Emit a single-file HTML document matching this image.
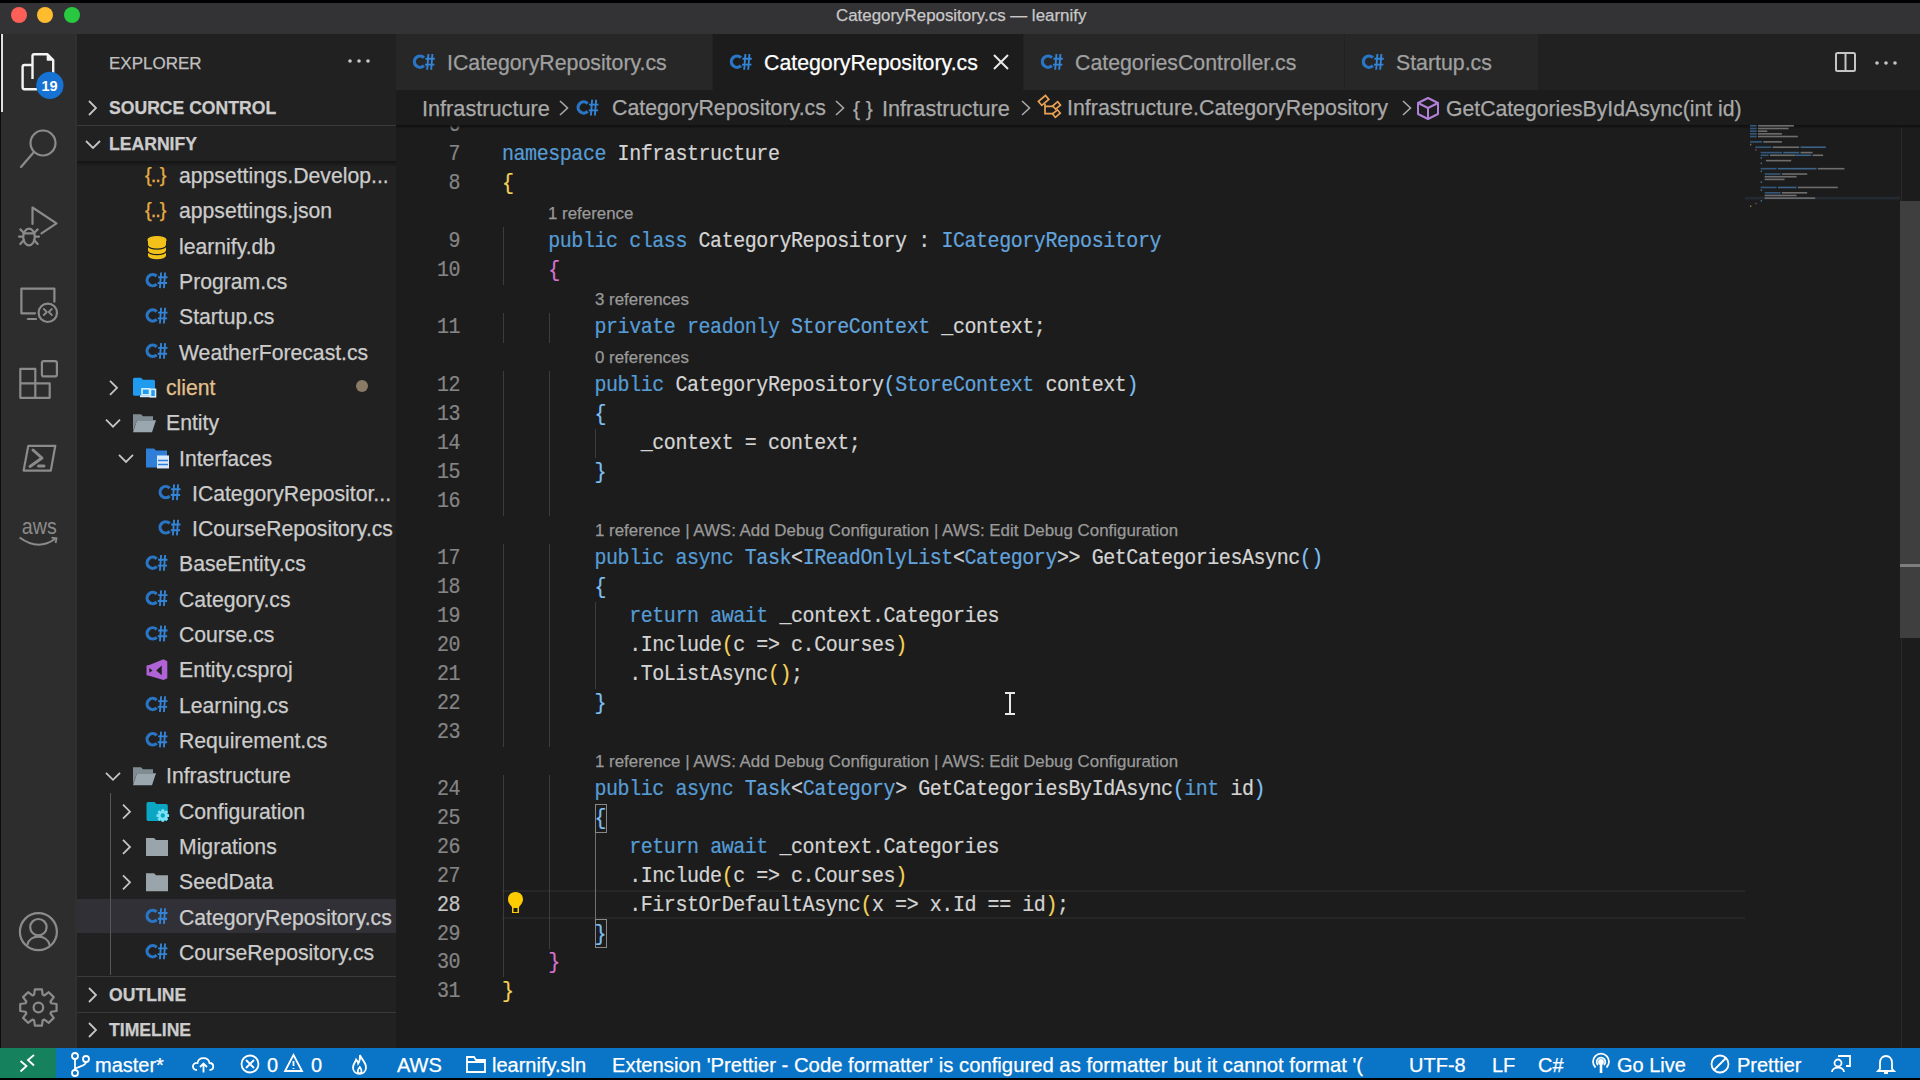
<!DOCTYPE html><html><head><meta charset='utf-8'><style>
*{margin:0;padding:0;box-sizing:border-box}
html,body{width:1920px;height:1080px;overflow:hidden;background:#000;font-family:"Liberation Sans", sans-serif}
.a{position:absolute}
.t{position:absolute;white-space:pre;line-height:1;font-family:"Liberation Sans", sans-serif}
.cs{position:absolute;font-family:"Liberation Sans", sans-serif;font-weight:700;color:#2f80d3;font-size:20px;letter-spacing:-2px;line-height:1}
.code{position:absolute;font-family:"Liberation Mono", monospace;white-space:pre;font-size:20px;letter-spacing:-0.44px;line-height:20px;height:20px;color:#d4d4d4;transform-origin:0 15.32px;transform:scaleY(1.147)}
.k{color:#569cd6}
.ty{color:#62a3dc}
.y{color:#f5d45a}
.p{color:#d873d2}
.bl{color:#7fc0f5}
.cl{position:absolute;font-family:"Liberation Sans", sans-serif;white-space:pre;font-size:16.9px;line-height:1;color:#999999}
.side{position:absolute;font-family:"Liberation Sans", sans-serif;white-space:pre;font-size:21.2px;line-height:1;color:#cccccc}
.hdr{position:absolute;font-family:"Liberation Sans", sans-serif;white-space:pre;font-size:17.6px;font-weight:700;line-height:1;color:#cccccc}
.sb{position:absolute;font-family:"Liberation Sans", sans-serif;white-space:pre;font-size:20px;line-height:1;color:#ffffff}
svg{position:absolute;overflow:visible}
.side,.t,.hdr,.sb,.cl{-webkit-text-stroke:0.25px currentColor}
.code{-webkit-text-stroke:0.2px currentColor}
</style></head><body>
<div class='a' style='left:0;top:3px;width:1920px;height:31px;background:#333235'></div>
<div class='a' style='left:11px;top:7px;width:16px;height:16px;border-radius:50%;background:#fe5f57'></div>
<div class='a' style='left:37px;top:7px;width:16px;height:16px;border-radius:50%;background:#febc2e'></div>
<div class='a' style='left:64px;top:7px;width:16px;height:16px;border-radius:50%;background:#28c840'></div>
<div class='t' style='left:836px;top:7.89px;font-size:16.9px;color:#c8c8c8'>CategoryRepository.cs — learnify</div>
<div class='a' style='left:0;top:34px;width:77px;height:1014px;background:#2d2d2d'></div>
<div class='a' style='left:0;top:34px;width:1px;height:1014px;background:#0c0c0c'></div>
<div class='a' style='left:75px;top:34px;width:2px;height:1014px;background:#303030'></div>
<div class='a' style='left:1px;top:34px;width:2px;height:78px;background:#e0e0e0'></div>
<svg style='left:0;top:0' width='80' height='1080'>
<g fill='none' stroke='#f4f4f4' stroke-width='2.4' stroke-linejoin='round'>
<path d='M32.5 79 V56 Q32.5 54.3 34.2 54.3 H47.5 L53.2 60 V75'/>
<path d='M47.5 55 V60 H52.5' fill='#f4f4f4' stroke-width='1.6'/>
<path d='M32 65 H24.5 Q22.6 65 22.6 66.9 V87.3 Q22.6 89.2 24.5 89.2 H37'/>
</g>
<circle cx='49.9' cy='85.4' r='13.6' fill='#1673d3'/>
<text x='49.6' y='90.6' font-family='Liberation Sans' font-weight='700' font-size='14.5' fill='#fff' text-anchor='middle'>19</text>
<g fill='none' stroke='#8b8b8b' stroke-width='2.2' stroke-linecap='round' stroke-linejoin='round'>
<circle cx='43' cy='143' r='12.5'/><path d='M34 152 L21 167'/>
<path d='M32.5 224 V207.5 L56.5 223.3 L41.5 233.3'/>
<ellipse cx='29' cy='237' rx='5.8' ry='8.3'/><path d='M23.3 233.3 H34.7 M20.3 229.4 L24 233 M19 236.6 H23 M20.3 244 L24 240 M37.7 229.4 L34 233 M39 236.6 H35 M37.7 244 L34 240'/>
<path d='M35 313.3 H21.4 V288.6 H54.4 V301.7'/><path d='M27.8 319 H36'/>
<circle cx='47.8' cy='312.8' r='9.2'/><path d='M43.8 309 L46.8 312 L43.8 315 M51.8 309 L48.8 312 L51.8 315' stroke-width='1.8'/>
<path d='M35.3 397.8 V368.9 H20.3 V397.8 H49.7 V383.3 H20.3' /><rect x='41.9' y='361.1' width='15' height='15.3' rx='2'/>
<path d='M28.3 445.8 H55.3 L50.8 470.6 H23.6 Z'/><path d='M33 450 L42 458 L30 466.4' stroke-width='3'/><path d='M38.5 466 H44' stroke-width='3'/>
<circle cx='38.4' cy='931.7' r='18.5'/><circle cx='38.4' cy='927.2' r='8.2'/><path d='M27.4 944.5 C30 934 46.8 934 49.4 944.5'/>
</g>
<text x='39.3' y='534' font-family='Liberation Sans' font-size='22' fill='#8b8b8b' text-anchor='middle' textLength='35' lengthAdjust='spacingAndGlyphs'>aws</text>
<path d='M19.6 537.5 Q38 551 55 539' fill='none' stroke='#8b8b8b' stroke-width='2'/><path d='M51.5 537.6 L56.5 538.3 L55.6 543' fill='none' stroke='#8b8b8b' stroke-width='1.8'/>
<g transform='translate(38.4 1007.5)' fill='none' stroke='#8b8b8b' stroke-width='2.2' stroke-linejoin='round'>
<path d='M-4.28 -12.80 L-3.53 -18.16 L3.53 -18.16 L4.28 -12.80 L6.02 -12.08 L10.35 -15.34 L15.34 -10.35 L12.08 -6.02 L12.80 -4.28 L18.16 -3.53 L18.16 3.53 L12.80 4.28 L12.08 6.02 L15.34 10.35 L10.35 15.34 L6.02 12.08 L4.28 12.80 L3.53 18.16 L-3.53 18.16 L-4.28 12.80 L-6.02 12.08 L-10.35 15.34 L-15.34 10.35 L-12.08 6.02 L-12.80 4.28 L-18.16 3.53 L-18.16 -3.53 L-12.80 -4.28 L-12.08 -6.02 L-15.34 -10.35 L-10.35 -15.34 L-6.02 -12.08 Z'/>
<circle r='4.8'/></g>
</svg>
<div class='a' style='left:77px;top:34px;width:319px;height:1014px;background:#212121'></div>
<div class='t' style='left:109px;top:54.91px;font-size:17px;color:#c0c0c0'>EXPLORER</div>
<svg style='left:0;top:0' width='400' height='80'><g fill='#c8c8c8'><circle cx='350' cy='61' r='1.8'/><circle cx='359' cy='61' r='1.8'/><circle cx='368' cy='61' r='1.8'/></g></svg>
<svg style='left:0;top:0' width='1' height='1'><path d='M89 101.0 L96.0 108 L89 115.0' fill='none' stroke='#c5c5c5' stroke-width='1.8'/></svg>
<div class='hdr' style='left:109px;top:99.60px;'>SOURCE CONTROL</div>
<div class='a' style='left:77px;top:125px;width:319px;height:1px;background:#3a3a3a'></div>
<svg style='left:0;top:0' width='1' height='1'><path d='M86 141.0 L93.0 148.0 L100.0 141.0' fill='none' stroke='#c5c5c5' stroke-width='1.8'/></svg>
<div class='hdr' style='left:109px;top:135.60px;'>LEARNIFY</div>
<div class='a' style='left:77px;top:161px;width:319px;height:6px;background:linear-gradient(#141414,rgba(33,33,33,0))'></div>
<div class='a' style='left:77px;top:898.6px;width:319px;height:34.5px;background:#313036'></div>
<div class='a' style='left:110px;top:793px;width:1px;height:182px;background:#585858'></div>
<div class='t' style='left:145px;top:164.9px;font-size:20px;color:#e5ad45;letter-spacing:-1px'>{..}</div>
<div class='side' style='left:179px;top:164.95px;color:#cccccc'>appsettings.Develop...</div>
<div class='t' style='left:145px;top:200.22px;font-size:20px;color:#e5ad45;letter-spacing:-1px'>{..}</div>
<div class='side' style='left:179px;top:200.27px;color:#cccccc'>appsettings.json</div>
<svg style='left:0;top:0' width='1' height='1'><rect x='148' y='251.24' width='18' height='4.6' fill='#f2c21b'/><ellipse cx='157' cy='255.84' rx='9' ry='3.4' fill='#f2c21b'/><ellipse cx='157' cy='251.24' rx='9' ry='3.4' fill='#f2c21b' stroke='#212121' stroke-width='1.3'/><rect x='148' y='245.64000000000001' width='18' height='4.6' fill='#f2c21b'/><ellipse cx='157' cy='250.24' rx='9' ry='3.4' fill='#f2c21b'/><ellipse cx='157' cy='245.64000000000001' rx='9' ry='3.4' fill='#f2c21b' stroke='#212121' stroke-width='1.3'/><rect x='148' y='240.04000000000002' width='18' height='4.6' fill='#f2c21b'/><ellipse cx='157' cy='244.64000000000001' rx='9' ry='3.4' fill='#f2c21b'/><ellipse cx='157' cy='240.04000000000002' rx='9' ry='3.4' fill='#f2c21b' stroke='#f2c21b' stroke-width='1.3'/></svg>
<div class='side' style='left:179px;top:235.59px;color:#cccccc'>learnify.db</div>
<svg style='left:0;top:0' width='1' height='1'><path d='M156.66 276.20 A5.6 5.6 0 1 0 156.66 284.12' fill='none' stroke='#2a76c6' stroke-width='3.2'/><g stroke='#3384d6' stroke-width='1.9'><path d='M161.1 272.46000000000004 L159.9 288.16 M165.1 272.46000000000004 L163.9 288.16 M158.1 277.26000000000005 H167.5 M157.7 283.06 H167.1'/></g></svg>
<div class='side' style='left:179px;top:270.91px;color:#cccccc'>Program.cs</div>
<svg style='left:0;top:0' width='1' height='1'><path d='M156.66 311.52 A5.6 5.6 0 1 0 156.66 319.44' fill='none' stroke='#2a76c6' stroke-width='3.2'/><g stroke='#3384d6' stroke-width='1.9'><path d='M161.1 307.78000000000003 L159.9 323.48 M165.1 307.78000000000003 L163.9 323.48 M158.1 312.58000000000004 H167.5 M157.7 318.38 H167.1'/></g></svg>
<div class='side' style='left:179px;top:306.23px;color:#cccccc'>Startup.cs</div>
<svg style='left:0;top:0' width='1' height='1'><path d='M156.66 346.84 A5.6 5.6 0 1 0 156.66 354.76' fill='none' stroke='#2a76c6' stroke-width='3.2'/><g stroke='#3384d6' stroke-width='1.9'><path d='M161.1 343.1 L159.9 358.8 M165.1 343.1 L163.9 358.8 M158.1 347.90000000000003 H167.5 M157.7 353.7 H167.1'/></g></svg>
<div class='side' style='left:179px;top:341.55px;color:#cccccc'>WeatherForecast.cs</div>
<svg style='left:0;top:0' width='1' height='1'><path d='M110 380.82000000000005 L117.0 387.82000000000005 L110 394.82000000000005' fill='none' stroke='#c5c5c5' stroke-width='1.8'/></svg>
<svg style='left:0;top:0' width='1' height='1'><path d='M134.5 377.82000000000005 H141 L143 379.82000000000005 H153.5 Q155 379.82000000000005 155 381.32000000000005 V395.82000000000005 H134.5 Q133 395.82000000000005 133 394.32000000000005 V379.32000000000005 Q133 377.82000000000005 134.5 377.82000000000005 Z' fill='#1f9bf0'/><rect x='142' y='388.82000000000005' width='7.5' height='6' fill='none' stroke='#d6ecff' stroke-width='1.6'/><path d='M140 396.32000000000005 H150' stroke='#d6ecff' stroke-width='1.8'/><rect x='150.5' y='389.32000000000005' width='5' height='7.5' fill='#1f9bf0' stroke='#d6ecff' stroke-width='1.6'/></svg>
<div class='side' style='left:166px;top:376.87px;color:#e2c08d'>client</div>
<svg style='left:0;top:0' width='1' height='1'><path d='M106 419.64 L113.0 426.64 L120.0 419.64' fill='none' stroke='#c5c5c5' stroke-width='1.8'/></svg>
<svg style='left:0;top:0' width='1' height='1'><path d='M133 414.14 H141 L143 416.14 H153 V420.14 H137 L133 431.14 Z' fill='#7f8c93'/><path d='M137 420.14 H156 L152 432.14 H133 Z' fill='#9aa7ae'/></svg>
<div class='side' style='left:166px;top:412.19px;color:#cccccc'>Entity</div>
<svg style='left:0;top:0' width='1' height='1'><path d='M119 454.96000000000004 L126.0 461.96000000000004 L133.0 454.96000000000004' fill='none' stroke='#c5c5c5' stroke-width='1.8'/></svg>
<svg style='left:0;top:0' width='1' height='1'><path d='M146 448.46000000000004 H154 L156 450.46000000000004 H167 V467.46000000000004 H146 Z' fill='#2f7fd8'/><rect x='157' y='455.46000000000004' width='12' height='13' fill='#d7e9fb'/><path d='M158 460.46000000000004 H168 M158 464.46000000000004 H168' stroke='#2f7fd8' stroke-width='1.5'/></svg>
<div class='side' style='left:179px;top:447.51px;color:#cccccc'>Interfaces</div>
<svg style='left:0;top:0' width='1' height='1'><path d='M169.66 488.12 A5.6 5.6 0 1 0 169.66 496.04' fill='none' stroke='#2a76c6' stroke-width='3.2'/><g stroke='#3384d6' stroke-width='1.9'><path d='M174.1 484.38 L172.9 500.08 M178.1 484.38 L176.9 500.08 M171.1 489.18 H180.5 M170.7 494.97999999999996 H180.1'/></g></svg>
<div class='side' style='left:192px;top:482.83px;color:#cccccc'>ICategoryRepositor...</div>
<svg style='left:0;top:0' width='1' height='1'><path d='M169.66 523.44 A5.6 5.6 0 1 0 169.66 531.36' fill='none' stroke='#2a76c6' stroke-width='3.2'/><g stroke='#3384d6' stroke-width='1.9'><path d='M174.1 519.6999999999999 L172.9 535.4 M178.1 519.6999999999999 L176.9 535.4 M171.1 524.5 H180.5 M170.7 530.3 H180.1'/></g></svg>
<div class='side' style='left:192px;top:518.15px;color:#cccccc'>ICourseRepository.cs</div>
<svg style='left:0;top:0' width='1' height='1'><path d='M156.66 558.76 A5.6 5.6 0 1 0 156.66 566.68' fill='none' stroke='#2a76c6' stroke-width='3.2'/><g stroke='#3384d6' stroke-width='1.9'><path d='M161.1 555.0199999999999 L159.9 570.7199999999999 M165.1 555.0199999999999 L163.9 570.7199999999999 M158.1 559.8199999999999 H167.5 M157.7 565.6199999999999 H167.1'/></g></svg>
<div class='side' style='left:179px;top:553.47px;color:#cccccc'>BaseEntity.cs</div>
<svg style='left:0;top:0' width='1' height='1'><path d='M156.66 594.08 A5.6 5.6 0 1 0 156.66 602.00' fill='none' stroke='#2a76c6' stroke-width='3.2'/><g stroke='#3384d6' stroke-width='1.9'><path d='M161.1 590.3399999999999 L159.9 606.04 M165.1 590.3399999999999 L163.9 606.04 M158.1 595.14 H167.5 M157.7 600.9399999999999 H167.1'/></g></svg>
<div class='side' style='left:179px;top:588.79px;color:#cccccc'>Category.cs</div>
<svg style='left:0;top:0' width='1' height='1'><path d='M156.66 629.40 A5.6 5.6 0 1 0 156.66 637.32' fill='none' stroke='#2a76c6' stroke-width='3.2'/><g stroke='#3384d6' stroke-width='1.9'><path d='M161.1 625.66 L159.9 641.36 M165.1 625.66 L163.9 641.36 M158.1 630.46 H167.5 M157.7 636.26 H167.1'/></g></svg>
<div class='side' style='left:179px;top:624.11px;color:#cccccc'>Course.cs</div>
<svg style='left:0;top:0' width='1' height='1'><path d='M146.50 665.38 L150.00 664.68 L163.50 659.18 L167.30 661.18 V678.18 L163.50 679.98 L150.00 675.98 L146.50 675.18 Z M149.30 667.98 L152.60 670.38 L149.30 672.78 Z M161.80 665.38 V675.18 L156.20 670.38 Z' fill='#b063d6' fill-rule='evenodd'/></svg>
<div class='side' style='left:179px;top:659.43px;color:#cccccc'>Entity.csproj</div>
<svg style='left:0;top:0' width='1' height='1'><path d='M156.66 700.04 A5.6 5.6 0 1 0 156.66 707.96' fill='none' stroke='#2a76c6' stroke-width='3.2'/><g stroke='#3384d6' stroke-width='1.9'><path d='M161.1 696.2999999999998 L159.9 711.9999999999999 M165.1 696.2999999999998 L163.9 711.9999999999999 M158.1 701.0999999999999 H167.5 M157.7 706.8999999999999 H167.1'/></g></svg>
<div class='side' style='left:179px;top:694.75px;color:#cccccc'>Learning.cs</div>
<svg style='left:0;top:0' width='1' height='1'><path d='M156.66 735.36 A5.6 5.6 0 1 0 156.66 743.28' fill='none' stroke='#2a76c6' stroke-width='3.2'/><g stroke='#3384d6' stroke-width='1.9'><path d='M161.1 731.6199999999999 L159.9 747.3199999999999 M165.1 731.6199999999999 L163.9 747.3199999999999 M158.1 736.42 H167.5 M157.7 742.2199999999999 H167.1'/></g></svg>
<div class='side' style='left:179px;top:730.07px;color:#cccccc'>Requirement.cs</div>
<svg style='left:0;top:0' width='1' height='1'><path d='M106 772.84 L113.0 779.84 L120.0 772.84' fill='none' stroke='#c5c5c5' stroke-width='1.8'/></svg>
<svg style='left:0;top:0' width='1' height='1'><path d='M133 767.34 H141 L143 769.34 H153 V773.34 H137 L133 784.34 Z' fill='#7f8c93'/><path d='M137 773.34 H156 L152 785.34 H133 Z' fill='#9aa7ae'/></svg>
<div class='side' style='left:166px;top:765.39px;color:#cccccc'>Infrastructure</div>
<svg style='left:0;top:0' width='1' height='1'><path d='M123 804.66 L130.0 811.66 L123 818.66' fill='none' stroke='#c5c5c5' stroke-width='1.8'/></svg>
<svg style='left:0;top:0' width='1' height='1'><path d='M148 802.06 H154.5 L156.5 804.06 H166 Q167.8 804.06 167.8 805.86 V819.26 Q167.8 821.06 166 821.06 H148 Q146.5 821.06 146.5 819.26 V803.86 Q146.5 802.06 148 802.06 Z' fill='#0aa6c4'/><path transform='translate(162.8 815.56)' d='M4.34 -1.54 L6.26 -1.33 L6.26 1.33 L4.34 1.54 L4.15 1.98 L5.37 3.49 L3.49 5.37 L1.98 4.15 L1.54 4.34 L1.33 6.26 L-1.33 6.26 L-1.54 4.34 L-1.98 4.15 L-3.49 5.37 L-5.37 3.49 L-4.15 1.98 L-4.34 1.54 L-6.26 1.33 L-6.26 -1.33 L-4.34 -1.54 L-4.15 -1.98 L-5.37 -3.49 L-3.49 -5.37 L-1.98 -4.15 L-1.54 -4.34 L-1.33 -6.26 L1.33 -6.26 L1.54 -4.34 L1.98 -4.15 L3.49 -5.37 L5.37 -3.49 L4.15 -1.98 Z M2.2 0 A2.2 2.2 0 1 0 -2.2 0 A2.2 2.2 0 1 0 2.2 0 Z' fill='#7fe3f7' fill-rule='evenodd' stroke='#212121' stroke-width='0'/></svg>
<div class='side' style='left:179px;top:800.71px;color:#cccccc'>Configuration</div>
<svg style='left:0;top:0' width='1' height='1'><path d='M123 839.98 L130.0 846.98 L123 853.98' fill='none' stroke='#c5c5c5' stroke-width='1.8'/></svg>
<svg style='left:0;top:0' width='1' height='1'><path d='M146 837.98 H154 L156 839.98 H168 V855.98 H146 Z' fill='#9aa5ab'/></svg>
<div class='side' style='left:179px;top:836.03px;color:#cccccc'>Migrations</div>
<svg style='left:0;top:0' width='1' height='1'><path d='M123 875.3 L130.0 882.3 L123 889.3' fill='none' stroke='#c5c5c5' stroke-width='1.8'/></svg>
<svg style='left:0;top:0' width='1' height='1'><path d='M146 873.3 H154 L156 875.3 H168 V891.3 H146 Z' fill='#9aa5ab'/></svg>
<div class='side' style='left:179px;top:871.35px;color:#cccccc'>SeedData</div>
<svg style='left:0;top:0' width='1' height='1'><path d='M156.66 911.96 A5.6 5.6 0 1 0 156.66 919.88' fill='none' stroke='#2a76c6' stroke-width='3.2'/><g stroke='#3384d6' stroke-width='1.9'><path d='M161.1 908.2199999999999 L159.9 923.92 M165.1 908.2199999999999 L163.9 923.92 M158.1 913.02 H167.5 M157.7 918.8199999999999 H167.1'/></g></svg>
<div class='side' style='left:179px;top:906.67px;color:#cccccc'>CategoryRepository.cs</div>
<svg style='left:0;top:0' width='1' height='1'><path d='M156.66 947.28 A5.6 5.6 0 1 0 156.66 955.20' fill='none' stroke='#2a76c6' stroke-width='3.2'/><g stroke='#3384d6' stroke-width='1.9'><path d='M161.1 943.5399999999998 L159.9 959.2399999999999 M165.1 943.5399999999998 L163.9 959.2399999999999 M158.1 948.3399999999999 H167.5 M157.7 954.1399999999999 H167.1'/></g></svg>
<div class='side' style='left:179px;top:941.99px;color:#cccccc'>CourseRepository.cs</div>
<div class='a' style='left:356px;top:380px;width:12px;height:12px;border-radius:50%;background:#8b7a66'></div>
<div class='a' style='left:77px;top:976px;width:319px;height:1px;background:#3a3a3a'></div>
<svg style='left:0;top:0' width='1' height='1'><path d='M89 988.0 L96.0 995 L89 1002.0' fill='none' stroke='#c5c5c5' stroke-width='1.8'/></svg>
<div class='hdr' style='left:109px;top:987.10px;'>OUTLINE</div>
<div class='a' style='left:77px;top:1012px;width:319px;height:1px;background:#3a3a3a'></div>
<svg style='left:0;top:0' width='1' height='1'><path d='M89 1023.0 L96.0 1030 L89 1037.0' fill='none' stroke='#c5c5c5' stroke-width='1.8'/></svg>
<div class='hdr' style='left:109px;top:1022.10px;'>TIMELINE</div>
<div class='a' style='left:396px;top:34px;width:1524px;height:1014px;background:#1c1c1c'></div>
<div class='a' style='left:396px;top:34px;width:1524px;height:56px;background:#212121'></div>
<div class='a' style='left:396px;top:34px;width:317px;height:56px;background:#272727;border-right:1px solid #222222'></div>
<svg style='left:0;top:0' width='1' height='1'><path d='M423.96 57.74 A5.6 5.6 0 1 0 423.96 65.66' fill='none' stroke='#2a76c6' stroke-width='3.2'/><g stroke='#3384d6' stroke-width='1.9'><path d='M428.40000000000003 54.0 L427.2 69.7 M432.40000000000003 54.0 L431.2 69.7 M425.40000000000003 58.800000000000004 H434.8 M425.0 64.60000000000001 H434.40000000000003'/></g></svg>
<div class='t' style='left:447px;top:53.17px;font-size:21.3px;color:#a0a0a0'>ICategoryRepository.cs</div>
<div class='a' style='left:713px;top:34px;width:311px;height:56px;background:#1c1c1c;border-right:1px solid #222222'></div>
<svg style='left:0;top:0' width='1' height='1'><path d='M740.96 57.74 A5.6 5.6 0 1 0 740.96 65.66' fill='none' stroke='#2a76c6' stroke-width='3.2'/><g stroke='#3384d6' stroke-width='1.9'><path d='M745.4 54.0 L744.1999999999999 69.7 M749.4 54.0 L748.1999999999999 69.7 M742.4 58.800000000000004 H751.8 M742.0 64.60000000000001 H751.4'/></g></svg>
<div class='t' style='left:764px;top:53.17px;font-size:21.3px;color:#ffffff'>CategoryRepository.cs</div>
<div class='a' style='left:1024px;top:34px;width:321px;height:56px;background:#272727;border-right:1px solid #222222'></div>
<svg style='left:0;top:0' width='1' height='1'><path d='M1051.96 57.74 A5.6 5.6 0 1 0 1051.96 65.66' fill='none' stroke='#2a76c6' stroke-width='3.2'/><g stroke='#3384d6' stroke-width='1.9'><path d='M1056.3999999999999 54.0 L1055.2 69.7 M1060.3999999999999 54.0 L1059.2 69.7 M1053.3999999999999 58.800000000000004 H1062.8 M1053.0 64.60000000000001 H1062.3999999999999'/></g></svg>
<div class='t' style='left:1075px;top:53.17px;font-size:21.3px;color:#a0a0a0'>CategoriesController.cs</div>
<div class='a' style='left:1345px;top:34px;width:194px;height:56px;background:#272727;border-right:1px solid #222222'></div>
<svg style='left:0;top:0' width='1' height='1'><path d='M1372.96 57.74 A5.6 5.6 0 1 0 1372.96 65.66' fill='none' stroke='#2a76c6' stroke-width='3.2'/><g stroke='#3384d6' stroke-width='1.9'><path d='M1377.3999999999999 54.0 L1376.2 69.7 M1381.3999999999999 54.0 L1380.2 69.7 M1374.3999999999999 58.800000000000004 H1383.8 M1374.0 64.60000000000001 H1383.3999999999999'/></g></svg>
<div class='t' style='left:1396px;top:53.17px;font-size:21.3px;color:#a0a0a0'>Startup.cs</div>
<svg style='left:0;top:0' width='1' height='1'><path d='M994 55 L1008 69 M1008 55 L994 69' stroke='#e8e8e8' stroke-width='2'/></svg>
<svg style='left:0;top:0' width='1' height='1'><rect x='1836' y='53' width='19' height='18' rx='1.5' fill='none' stroke='#c5c5c5' stroke-width='2'/><path d='M1845.5 53 V71' stroke='#c5c5c5' stroke-width='2'/><g fill='#c5c5c5'><circle cx='1877' cy='63' r='1.8'/><circle cx='1886' cy='63' r='1.8'/><circle cx='1895' cy='63' r='1.8'/></g></svg>
<div class='a' style='left:502px;top:889.9px;width:1243px;height:28.86px;border-top:2px solid #262626;border-bottom:2px solid #262626'></div>
<div class='a' style='left:503px;top:226.8px;width:1px;height:29.16px;background:#3c3c3c'></div>
<div class='a' style='left:503px;top:255.6px;width:1px;height:29.16px;background:#3c3c3c'></div>
<div class='a' style='left:503px;top:313.4px;width:1px;height:29.16px;background:#3c3c3c'></div>
<div class='a' style='left:503px;top:371.1px;width:1px;height:29.16px;background:#3c3c3c'></div>
<div class='a' style='left:503px;top:399.9px;width:1px;height:29.16px;background:#3c3c3c'></div>
<div class='a' style='left:503px;top:428.8px;width:1px;height:29.16px;background:#3c3c3c'></div>
<div class='a' style='left:503px;top:457.7px;width:1px;height:29.16px;background:#3c3c3c'></div>
<div class='a' style='left:503px;top:486.5px;width:1px;height:29.16px;background:#3c3c3c'></div>
<div class='a' style='left:503px;top:544.2px;width:1px;height:29.16px;background:#3c3c3c'></div>
<div class='a' style='left:503px;top:573.1px;width:1px;height:29.16px;background:#3c3c3c'></div>
<div class='a' style='left:503px;top:602.0px;width:1px;height:29.16px;background:#3c3c3c'></div>
<div class='a' style='left:503px;top:630.8px;width:1px;height:29.16px;background:#3c3c3c'></div>
<div class='a' style='left:503px;top:659.7px;width:1px;height:29.16px;background:#3c3c3c'></div>
<div class='a' style='left:503px;top:688.5px;width:1px;height:29.16px;background:#3c3c3c'></div>
<div class='a' style='left:503px;top:717.4px;width:1px;height:29.16px;background:#3c3c3c'></div>
<div class='a' style='left:503px;top:775.1px;width:1px;height:29.16px;background:#3c3c3c'></div>
<div class='a' style='left:503px;top:804.0px;width:1px;height:29.16px;background:#3c3c3c'></div>
<div class='a' style='left:503px;top:832.8px;width:1px;height:29.16px;background:#3c3c3c'></div>
<div class='a' style='left:503px;top:861.7px;width:1px;height:29.16px;background:#3c3c3c'></div>
<div class='a' style='left:503px;top:890.6px;width:1px;height:29.16px;background:#3c3c3c'></div>
<div class='a' style='left:503px;top:919.4px;width:1px;height:29.16px;background:#3c3c3c'></div>
<div class='a' style='left:503px;top:948.3px;width:1px;height:29.16px;background:#3c3c3c'></div>
<div class='a' style='left:548.5px;top:313.4px;width:1px;height:29.16px;background:#3c3c3c'></div>
<div class='a' style='left:548.5px;top:371.1px;width:1px;height:29.16px;background:#3c3c3c'></div>
<div class='a' style='left:548.5px;top:399.9px;width:1px;height:29.16px;background:#3c3c3c'></div>
<div class='a' style='left:548.5px;top:428.8px;width:1px;height:29.16px;background:#3c3c3c'></div>
<div class='a' style='left:548.5px;top:457.7px;width:1px;height:29.16px;background:#3c3c3c'></div>
<div class='a' style='left:548.5px;top:486.5px;width:1px;height:29.16px;background:#3c3c3c'></div>
<div class='a' style='left:548.5px;top:544.2px;width:1px;height:29.16px;background:#3c3c3c'></div>
<div class='a' style='left:548.5px;top:573.1px;width:1px;height:29.16px;background:#3c3c3c'></div>
<div class='a' style='left:548.5px;top:602.0px;width:1px;height:29.16px;background:#3c3c3c'></div>
<div class='a' style='left:548.5px;top:630.8px;width:1px;height:29.16px;background:#3c3c3c'></div>
<div class='a' style='left:548.5px;top:659.7px;width:1px;height:29.16px;background:#3c3c3c'></div>
<div class='a' style='left:548.5px;top:688.5px;width:1px;height:29.16px;background:#3c3c3c'></div>
<div class='a' style='left:548.5px;top:717.4px;width:1px;height:29.16px;background:#3c3c3c'></div>
<div class='a' style='left:548.5px;top:775.1px;width:1px;height:29.16px;background:#3c3c3c'></div>
<div class='a' style='left:548.5px;top:804.0px;width:1px;height:29.16px;background:#3c3c3c'></div>
<div class='a' style='left:548.5px;top:832.8px;width:1px;height:29.16px;background:#3c3c3c'></div>
<div class='a' style='left:548.5px;top:861.7px;width:1px;height:29.16px;background:#3c3c3c'></div>
<div class='a' style='left:548.5px;top:890.6px;width:1px;height:29.16px;background:#3c3c3c'></div>
<div class='a' style='left:548.5px;top:919.4px;width:1px;height:29.16px;background:#3c3c3c'></div>
<div class='a' style='left:595px;top:428.8px;width:1px;height:29.16px;background:#3c3c3c'></div>
<div class='a' style='left:595px;top:602.0px;width:1px;height:29.16px;background:#3c3c3c'></div>
<div class='a' style='left:595px;top:630.8px;width:1px;height:29.16px;background:#3c3c3c'></div>
<div class='a' style='left:595px;top:659.7px;width:1px;height:29.16px;background:#3c3c3c'></div>
<div class='a' style='left:595px;top:832.8px;width:1px;height:29.16px;background:#707070'></div>
<div class='a' style='left:595px;top:861.7px;width:1px;height:29.16px;background:#707070'></div>
<div class='a' style='left:595px;top:890.6px;width:1px;height:29.16px;background:#707070'></div>
<div class='a' style='left:595px;top:804.0px;width:12px;height:28.6px;border:1px solid #888888'></div>
<div class='a' style='left:595px;top:919.4px;width:12px;height:28.6px;border:1px solid #888888'></div>
<div class='code' style='left:448.44px;top:116.44px;color:#858585'>6</div>
<div class='code' style='left:448.44px;top:145.30px;color:#858585'>7</div>
<div class='code' style='left:502px;top:145.30px'><span class='k'>namespace</span> Infrastructure</div>
<div class='code' style='left:448.44px;top:174.16px;color:#858585'>8</div>
<div class='code' style='left:502px;top:174.16px'><span class='y'>{</span></div>
<div class='code' style='left:448.44px;top:231.88px;color:#858585'>9</div>
<div class='code' style='left:502px;top:231.88px'>    <span class='k'>public</span> <span class='k'>class</span> CategoryRepository : <span class='ty'>ICategoryRepository</span></div>
<div class='code' style='left:436.88px;top:260.74px;color:#858585'>10</div>
<div class='code' style='left:502px;top:260.74px'>    <span class='p'>{</span></div>
<div class='code' style='left:436.88px;top:318.46px;color:#858585'>11</div>
<div class='code' style='left:502px;top:318.46px'>        <span class='k'>private</span> <span class='k'>readonly</span> <span class='ty'>StoreContext</span> _context;</div>
<div class='code' style='left:436.88px;top:376.18px;color:#858585'>12</div>
<div class='code' style='left:502px;top:376.18px'>        <span class='k'>public</span> CategoryRepository<span class='bl'>(</span><span class='ty'>StoreContext</span> context<span class='bl'>)</span></div>
<div class='code' style='left:436.88px;top:405.04px;color:#858585'>13</div>
<div class='code' style='left:502px;top:405.04px'>        <span class='bl'>{</span></div>
<div class='code' style='left:436.88px;top:433.90px;color:#858585'>14</div>
<div class='code' style='left:502px;top:433.90px'>            _context = context;</div>
<div class='code' style='left:436.88px;top:462.76px;color:#858585'>15</div>
<div class='code' style='left:502px;top:462.76px'>        <span class='bl'>}</span></div>
<div class='code' style='left:436.88px;top:491.62px;color:#858585'>16</div>
<div class='code' style='left:436.88px;top:549.34px;color:#858585'>17</div>
<div class='code' style='left:502px;top:549.34px'>        <span class='k'>public</span> <span class='k'>async</span> <span class='ty'>Task</span>&lt;<span class='ty'>IReadOnlyList</span>&lt;<span class='ty'>Category</span>&gt;&gt; GetCategoriesAsync<span class='bl'>()</span></div>
<div class='code' style='left:436.88px;top:578.20px;color:#858585'>18</div>
<div class='code' style='left:502px;top:578.20px'>        <span class='bl'>{</span></div>
<div class='code' style='left:436.88px;top:607.06px;color:#858585'>19</div>
<div class='code' style='left:502px;top:607.06px'>           <span class='k'>return</span> <span class='k'>await</span> _context.Categories</div>
<div class='code' style='left:436.88px;top:635.92px;color:#858585'>20</div>
<div class='code' style='left:502px;top:635.92px'>           .Include<span class='y'>(</span>c =&gt; c.Courses<span class='y'>)</span></div>
<div class='code' style='left:436.88px;top:664.78px;color:#858585'>21</div>
<div class='code' style='left:502px;top:664.78px'>           .ToListAsync<span class='y'>()</span>;</div>
<div class='code' style='left:436.88px;top:693.64px;color:#858585'>22</div>
<div class='code' style='left:502px;top:693.64px'>        <span class='bl'>}</span></div>
<div class='code' style='left:436.88px;top:722.50px;color:#858585'>23</div>
<div class='code' style='left:436.88px;top:780.22px;color:#858585'>24</div>
<div class='code' style='left:502px;top:780.22px'>        <span class='k'>public</span> <span class='k'>async</span> <span class='ty'>Task</span>&lt;<span class='ty'>Category</span>&gt; GetCategoriesByIdAsync<span class='bl'>(</span><span class='k'>int</span> id<span class='bl'>)</span></div>
<div class='code' style='left:436.88px;top:809.08px;color:#858585'>25</div>
<div class='code' style='left:502px;top:809.08px'>        <span class='bl'>{</span></div>
<div class='code' style='left:436.88px;top:837.94px;color:#858585'>26</div>
<div class='code' style='left:502px;top:837.94px'>           <span class='k'>return</span> <span class='k'>await</span> _context.Categories</div>
<div class='code' style='left:436.88px;top:866.80px;color:#858585'>27</div>
<div class='code' style='left:502px;top:866.80px'>           .Include<span class='y'>(</span>c =&gt; c.Courses<span class='y'>)</span></div>
<div class='code' style='left:436.88px;top:895.66px;color:#c6c6c6'>28</div>
<div class='code' style='left:502px;top:895.66px'>           .FirstOrDefaultAsync<span class='y'>(</span>x =&gt; x.Id == id<span class='y'>)</span>;</div>
<div class='code' style='left:436.88px;top:924.52px;color:#858585'>29</div>
<div class='code' style='left:502px;top:924.52px'>        <span class='bl'>}</span></div>
<div class='code' style='left:436.88px;top:953.38px;color:#858585'>30</div>
<div class='code' style='left:502px;top:953.38px'>    <span class='p'>}</span></div>
<div class='code' style='left:436.88px;top:982.24px;color:#858585'>31</div>
<div class='code' style='left:502px;top:982.24px'><span class='y'>}</span></div>
<div class='cl' style='left:548px;top:205.61px;'>1 reference</div>
<div class='cl' style='left:595px;top:292.19px;'>3 references</div>
<div class='cl' style='left:595px;top:349.91px;'>0 references</div>
<div class='cl' style='left:595px;top:523.07px;'>1 reference | AWS: Add Debug Configuration | AWS: Edit Debug Configuration</div>
<div class='cl' style='left:595px;top:753.95px;'>1 reference | AWS: Add Debug Configuration | AWS: Edit Debug Configuration</div>
<svg style='left:0;top:0' width='1' height='1'><path d='M515.5 892 C510 892 508 896 508 899.5 C508 903 510.5 905 512 907 V913 H519 V907 C520.5 905 523 903 523 899.5 C523 896 521 892 515.5 892 Z' fill='#ffcc00'/><rect x='513.5' y='908' width='4' height='4' fill='#1c1c1c'/></svg>
<svg style='left:0;top:0' width='1' height='1'><path d='M1005 693 H1015 M1010 693 V714 M1005 714 H1015' stroke='#e8e8e8' stroke-width='2'/></svg>
<div class='a' style='left:396px;top:90px;width:1524px;height:35px;background:#1c1c1c;z-index:0'></div>
<div class='t' style='left:422px;top:97.93px;font-size:21.7px;color:#a9a9a9'>Infrastructure</div>
<svg style='left:0;top:0' width='1' height='1'><path d='M560 101 L567.5 108 L560 115' fill='none' stroke='#a9a9a9' stroke-width='1.6'/></svg>
<svg style='left:0;top:0' width='1' height='1'><path d='M587.66 103.54 A5.6 5.6 0 1 0 587.66 111.46' fill='none' stroke='#2a76c6' stroke-width='3.2'/><g stroke='#3384d6' stroke-width='1.9'><path d='M592.1 99.8 L590.9 115.5 M596.1 99.8 L594.9 115.5 M589.1 104.6 H598.5 M588.7 110.4 H598.1'/></g></svg>
<div class='t' style='left:612px;top:98.27px;font-size:21.3px;color:#a9a9a9'>CategoryRepository.cs</div>
<svg style='left:0;top:0' width='1' height='1'><path d='M836 101 L843.5 108 L836 115' fill='none' stroke='#a9a9a9' stroke-width='1.6'/></svg>
<div class='t' style='left:853px;top:97.52px;font-size:21px;color:#a9a9a9'>{ }</div>
<div class='t' style='left:882px;top:97.93px;font-size:21.7px;color:#a9a9a9'>Infrastructure</div>
<svg style='left:0;top:0' width='1' height='1'><path d='M1022 101 L1029.5 108 L1022 115' fill='none' stroke='#a9a9a9' stroke-width='1.6'/></svg>
<svg style='left:0;top:0' width='1' height='1'><g fill='none' stroke='#eaa355' stroke-width='1.7'><rect x='-4.6' y='-2.6' width='9.2' height='5.2' transform='translate(1043.6 100.4) rotate(-40)'/><rect x='-3.2' y='-2.2' width='6.4' height='4.4' transform='translate(1056.6 105.4) rotate(-40)'/><rect x='-3.2' y='-2.2' width='6.4' height='4.4' transform='translate(1056.4 113.6) rotate(-40)'/><path d='M1045 103.8 V113.6 H1053.2 M1045 106.4 H1053.6'/></g></svg>
<div class='t' style='left:1067px;top:98.18px;font-size:21.4px;color:#a9a9a9'>Infrastructure.CategoryRepository</div>
<svg style='left:0;top:0' width='1' height='1'><path d='M1403 101 L1410.5 108 L1403 115' fill='none' stroke='#a9a9a9' stroke-width='1.6'/></svg>
<svg style='left:0;top:0' width='1' height='1'><g fill='none' stroke='#b180d7' stroke-width='2' stroke-linejoin='round'><path d='M1428 98 L1438 103 V114 L1428 119 L1418 114 V103 Z'/><path d='M1418 103 L1428 108 L1438 103 M1428 108 V119'/></g></svg>
<div class='t' style='left:1446px;top:98.35px;font-size:21.2px;color:#a9a9a9'>GetCategoriesByIdAsync(int id)</div>
<div class='a' style='left:1901px;top:125px;width:1px;height:922px;background:#2a2a2a'></div>
<div class='a' style='left:1900px;top:201px;width:20px;height:437px;background:#3f3f3f'></div>
<div class='a' style='left:1900px;top:563.5px;width:20px;height:3px;background:#7e7e7e'></div>
<div class='a' style='left:396px;top:125px;width:1524px;height:4px;background:linear-gradient(#0e0e0e,rgba(28,28,28,0))'></div>
<div class='a' style='left:0;top:1048px;width:1920px;height:30px;background:#0a74c6'></div>
<div class='a' style='left:0;top:1048px;width:56px;height:30px;background:#16825d'></div>
<svg style='left:0;top:0' width='1' height='1'><g fill='none' stroke='#ffffff' stroke-width='1.8'>
<path d='M20.5 1061 L26.5 1066 L20.5 1071.5'/><path d='M34 1055 L28 1060 L34 1065.5'/>
<circle cx='75' cy='1056' r='3'/><circle cx='75' cy='1073' r='3'/><circle cx='86' cy='1059' r='3'/><path d='M75 1059 V1070 M86 1062 C86 1067 75 1066 75 1070'/>
<path d='M197 1070 C191.5 1070 191.5 1062.5 197.5 1063 C198.5 1056.5 208.5 1056.5 209.5 1063 C214.5 1063 214.5 1070 209.5 1070'/><path d='M203.5 1072.5 V1063.5 M200 1067 L203.5 1063.5 L207 1067'/>
<circle cx='250' cy='1064' r='8.5'/><path d='M246 1060 L254 1068 M254 1060 L246 1068'/>
<path d='M293.5 1055 L302 1071 H285 Z'/><path d='M293.5 1061 V1066 M293.5 1068 V1069'/>
<path d='M360 1055 C361 1059 366 1062 366 1067.5 C366 1071.5 363.2 1073.8 359.5 1073.8 C355.8 1073.8 353 1071.5 353 1067.5 C353 1064 355.5 1062 356.2 1059.5 C357.5 1061 358 1062 358.2 1063.5 C359.6 1061.5 360.2 1058.5 360 1055 Z M359.5 1073.5 C357.2 1072.5 357 1070.5 359.8 1067 C362.2 1070.5 362 1072.5 359.5 1073.5'/>
<path d='M467 1057 H474 L476 1060 H485 V1072 H467 Z M467 1062 H485'/>
<circle cx='1601' cy='1062' r='2' fill='#fff'/><path d='M1595.5 1067.5 A8 8 0 1 1 1606.5 1067.5 M1598 1065 A4.3 4.3 0 1 1 1604 1065'/><path d='M1601 1064 V1073' stroke-width='2.6'/>
<circle cx='1720' cy='1064' r='8.5'/><path d='M1714 1070 L1726 1058'/>
<path d='M1838 1056 H1850 V1066 H1846 M1832 1072 C1832 1066 1844 1066 1844 1072'/><circle cx='1838' cy='1063' r='3.5'/>
<path d='M1880 1069 V1063 C1880 1058 1883 1056 1886 1056 C1889 1056 1892 1058 1892 1063 V1069 L1894 1071 H1878 Z M1884 1073 H1888'/>
</g></svg>
<div class='sb' style='left:95px;top:1055.07px;'>master*</div>
<div class='sb' style='left:267px;top:1055.07px;'>0</div>
<div class='sb' style='left:311px;top:1055.07px;'>0</div>
<div class='sb' style='left:397px;top:1055.07px;'>AWS</div>
<div class='sb' style='left:492px;top:1055.07px;'>learnify.sln</div>
<div class='sb' style='left:612px;top:1055.07px;font-size:20.3px'>Extension 'Prettier - Code formatter' is configured as formatter but it cannot format '(</div>
<div class='sb' style='left:1409px;top:1055.07px;'>UTF-8</div>
<div class='sb' style='left:1492px;top:1055.07px;'>LF</div>
<div class='sb' style='left:1538px;top:1055.07px;'>C#</div>
<div class='sb' style='left:1617px;top:1055.07px;'>Go Live</div>
<div class='sb' style='left:1737px;top:1055.07px;'>Prettier</div>
<svg style='left:0;top:0' width='1920' height='1080'><rect x='1745' y='196.86' width='155' height='2.6' fill='#232a31'/><rect x='1750.00' y='125.00' width='6.65' height='1.6' fill='#34587a'/><rect x='1757.98' y='125.00' width='35.91' height='1.6' fill='#6e6e6e'/><rect x='1750.00' y='127.68' width='6.65' height='1.6' fill='#34587a'/><rect x='1757.98' y='127.68' width='30.59' height='1.6' fill='#6e6e6e'/><rect x='1750.00' y='130.36' width='6.65' height='1.6' fill='#34587a'/><rect x='1757.98' y='130.36' width='9.31' height='1.6' fill='#6e6e6e'/><rect x='1750.00' y='133.04' width='6.65' height='1.6' fill='#34587a'/><rect x='1757.98' y='133.04' width='23.94' height='1.6' fill='#6e6e6e'/><rect x='1750.00' y='135.72' width='6.65' height='1.6' fill='#34587a'/><rect x='1757.98' y='135.72' width='39.90' height='1.6' fill='#6e6e6e'/><rect x='1750.00' y='141.08' width='11.97' height='1.6' fill='#34587a'/><rect x='1763.30' y='141.08' width='18.62' height='1.6' fill='#6e6e6e'/><rect x='1750.00' y='143.76' width='1.33' height='1.6' fill='#8a7838'/><rect x='1755.32' y='146.44' width='15.96' height='1.6' fill='#34587a'/><rect x='1772.61' y='146.44' width='26.60' height='1.6' fill='#6e6e6e'/><rect x='1800.54' y='146.44' width='25.27' height='1.6' fill='#3b6488'/><rect x='1755.32' y='149.12' width='1.33' height='1.6' fill='#784878'/><rect x='1760.64' y='151.80' width='21.28' height='1.6' fill='#34587a'/><rect x='1783.25' y='151.80' width='15.96' height='1.6' fill='#3b6488'/><rect x='1800.54' y='151.80' width='11.97' height='1.6' fill='#6e6e6e'/><rect x='1760.64' y='154.48' width='7.98' height='1.6' fill='#34587a'/><rect x='1769.95' y='154.48' width='25.27' height='1.6' fill='#6e6e6e'/><rect x='1795.22' y='154.48' width='15.96' height='1.6' fill='#3b6488'/><rect x='1812.51' y='154.48' width='10.64' height='1.6' fill='#6e6e6e'/><rect x='1760.64' y='157.16' width='1.33' height='1.6' fill='#4a7090'/><rect x='1765.96' y='159.84' width='25.27' height='1.6' fill='#6e6e6e'/><rect x='1760.64' y='162.52' width='1.33' height='1.6' fill='#4a7090'/><rect x='1760.64' y='167.88' width='15.96' height='1.6' fill='#34587a'/><rect x='1777.93' y='167.88' width='38.57' height='1.6' fill='#3b6488'/><rect x='1817.83' y='167.88' width='26.60' height='1.6' fill='#6e6e6e'/><rect x='1760.64' y='170.56' width='1.33' height='1.6' fill='#4a7090'/><rect x='1764.63' y='173.24' width='15.96' height='1.6' fill='#34587a'/><rect x='1781.92' y='173.24' width='25.27' height='1.6' fill='#6e6e6e'/><rect x='1764.63' y='175.92' width='31.92' height='1.6' fill='#6e6e6e'/><rect x='1764.63' y='178.60' width='19.95' height='1.6' fill='#6e6e6e'/><rect x='1760.64' y='181.28' width='1.33' height='1.6' fill='#4a7090'/><rect x='1760.64' y='186.64' width='15.96' height='1.6' fill='#34587a'/><rect x='1777.93' y='186.64' width='18.62' height='1.6' fill='#3b6488'/><rect x='1797.88' y='186.64' width='39.90' height='1.6' fill='#6e6e6e'/><rect x='1760.64' y='189.32' width='1.33' height='1.6' fill='#4a7090'/><rect x='1764.63' y='192.00' width='15.96' height='1.6' fill='#34587a'/><rect x='1781.92' y='192.00' width='25.27' height='1.6' fill='#6e6e6e'/><rect x='1764.63' y='194.68' width='31.92' height='1.6' fill='#6e6e6e'/><rect x='1764.63' y='197.36' width='50.54' height='1.6' fill='#6e6e6e'/><rect x='1760.64' y='200.04' width='1.33' height='1.6' fill='#4a7090'/><rect x='1755.32' y='202.72' width='1.33' height='1.6' fill='#784878'/><rect x='1750.00' y='205.40' width='1.33' height='1.6' fill='#8a7838'/></svg>
</body></html>
